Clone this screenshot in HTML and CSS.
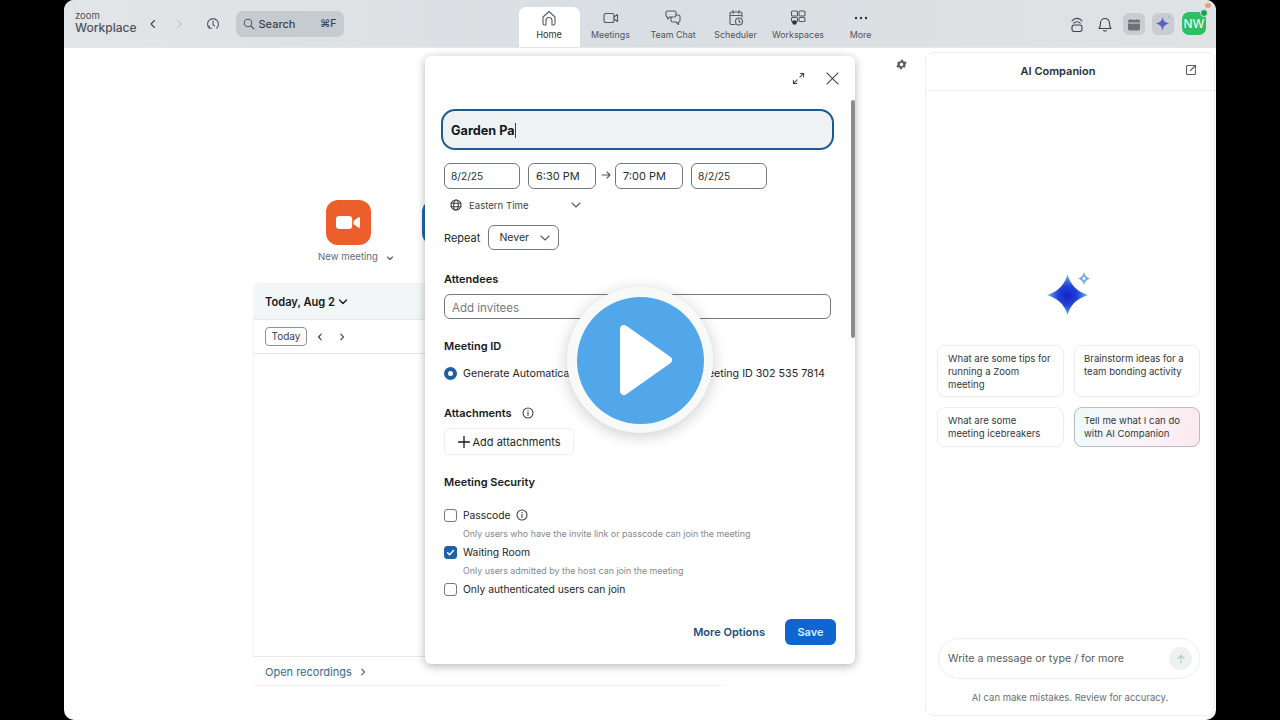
FILE: index.html
```html
<!DOCTYPE html>
<html lang="en">
<head>
<meta charset="utf-8">
<title>Zoom Workplace</title>
<link rel="stylesheet" href="styles.css">
</head>
<body>
<div class="frame">
  <header class="topbar">
    <div class="brand"><span class="brand-zoom">zoom</span><span class="brand-name">Workplace</span></div>
    <div class="history">
      <svg class="ic10" viewBox="0 0 10 10"><path d="M6.500 1.500 3 5l3.500 3.500" class="st dark"/></svg>
      <svg class="ic10 second" viewBox="0 0 10 10"><path d="M3.500 1.500 7 5 3.500 8.500" class="st faint"/></svg>
      <svg class="ic14 third" viewBox="0 0 14 14"><path d="M3.300 11.200A5.500 5.500 0 1 1 10.700 11.200M3.300 11.200V8.800M3.300 11.200H5.600M7 4v3.500l1.500 1.500" class="st mid"/></svg>
    </div>
    <div class="search">
      <svg class="ic12" viewBox="0 0 12 12"><circle cx="5" cy="5" r="3.800" class="st mid"/><path d="m8 8 3 3" class="st mid"/></svg>
      <span class="search-text">Search</span>
      <span class="search-key">⌘F</span>
    </div>
    <nav class="tabs">
      <div class="tab active">
        <svg class="tab-ic" viewBox="0 0 18 18"><path d="M3 8 9 2.500 15 8v6.500a1.500 1.500 0 0 1-1.500 1.500H12v-4.500a3 3 0 0 0-6 0V16H4.500A1.500 1.500 0 0 1 3 14.500Z" class="st mid"/></svg>
        <span>Home</span>
      </div>
      <div class="tab w62">
        <svg class="tab-ic" viewBox="0 0 18 18"><rect x="2" y="4.500" width="10" height="9" rx="2" class="st mid"/><path d="m12 8 3.500-2.500v7L12 10" class="st mid"/></svg>
        <span>Meetings</span>
      </div>
      <div class="tab w63">
        <svg class="tab-ic" viewBox="0 0 18 18"><path d="M3.500 2h7A1.500 1.500 0 0 1 12 3.500v3A1.500 1.500 0 0 1 10.500 8H6L3.500 10V8A1.500 1.500 0 0 1 2 6.500v-3A1.500 1.500 0 0 1 3.500 2Z" class="st mid"/><path d="M12 6h2.500A1.500 1.500 0 0 1 16 7.500v4a1.500 1.500 0 0 1-1.500 1.500V15.500L12 13H8.500A1.500 1.500 0 0 1 7 11.500V8" class="st mid"/></svg>
        <span>Team Chat</span>
      </div>
      <div class="tab w62">
        <svg class="tab-ic" viewBox="0 0 18 18"><path d="M8 15.500H4.500A1.500 1.500 0 0 1 3 14V4.500A1.500 1.500 0 0 1 4.500 3h9A1.500 1.500 0 0 1 15 4.500V8M3 6.500h12M6 1.500v3M12 1.500v3" class="st mid"/><circle cx="12" cy="12.500" r="3.500" class="st mid"/><path d="M12 10.500v2l1.300 1" class="st mid"/></svg>
        <span>Scheduler</span>
      </div>
      <div class="tab w63">
        <svg class="tab-ic" viewBox="0 0 18 18"><rect x="2.500" y="2" width="6" height="5" rx="1" class="st mid"/><rect x="10" y="2" width="6" height="5" rx="1" class="st mid"/><rect x="2.500" y="8.500" width="6" height="4" rx="1" class="st mid"/><rect x="10" y="8.500" width="6" height="4" rx="1" class="st mid"/><circle cx="5.500" cy="13.500" r="2.300" class="fill-dark"/></svg>
        <span>Workspaces</span>
      </div>
      <div class="tab w62">
        <svg class="tab-ic" viewBox="0 0 18 18"><circle cx="4" cy="9" r="1.200" class="fill-dark"/><circle cx="9" cy="9" r="1.200" class="fill-dark"/><circle cx="14" cy="9" r="1.200" class="fill-dark"/></svg>
        <span>More</span>
      </div>
    </nav>
    <div class="tools">
      <svg class="tool" viewBox="0 0 16 18"><path d="M3 6C5.500 2.500 10.500 2.500 13 6M4.800 8.200C6.500 6.300 9.500 6.300 11.200 8.200" class="st dark"/><rect x="3" y="10" width="10" height="6.500" rx="2.200" class="st dark"/></svg>
      <svg class="tool bell" viewBox="0 0 16 18"><path d="M2 13.500c1.500-1.500 1.500-3 1.500-5.500a4.500 4.500 0 0 1 9 0c0 2.500 0 4 1.500 5.500ZM6.500 15.500c.7.800 2.300.8 3 0" class="st dark"/></svg>
      <div class="tool-box">
        <svg class="gift" viewBox="0 0 16 16"><rect x="2" y="3.500" width="12" height="11" rx="1.800" class="fill-gift"/><path d="M2 7h12M5.500 1.500 7 3.500M10.500 1.500 9 3.500" class="st light"/></svg>
      </div>
      <div class="tool-box">
        <svg class="tool-star" viewBox="0 0 20 20"><path d="M9 2.500C9.800 7 11 8.500 16 10 11 11.500 9.800 13 9 18 8.200 13 7 11.500 2 10 7 8.500 8.200 7 9 2.500Z" class="fill-violet"/><path d="M15.500 1.500c.3 1.500.7 1.800 2 2-1.300.3-1.700.7-2 2-.2-1.300-.7-1.700-2-2 1.300-.2 1.800-.5 2-2Z" class="fill-lilac"/></svg>
      </div>
      <div class="avatar">NW<i class="avatar-dot"></i></div>
    </div>
    <i class="corner-dot"></i>
  </header>

  <main class="main">
    <section class="home">
      <div class="home-tools">
        <svg class="gear" viewBox="0 0 24 24"><path d="M19.400 13a7.700 7.700 0 0 0 0-2l2.100-1.600-2-3.500-2.500 1a7.500 7.500 0 0 0-1.700-1l-.4-2.600h-4l-.4 2.600a7.500 7.500 0 0 0-1.700 1l-2.500-1-2 3.500L4.600 11a7.700 7.700 0 0 0 0 2l-2.100 1.600 2 3.500 2.500-1a7.500 7.500 0 0 0 1.700 1l.4 2.600h4l.4-2.600a7.500 7.500 0 0 0 1.700-1l2.500 1 2-3.500ZM12 15.200a3.200 3.200 0 1 1 0-6.400 3.200 3.200 0 0 1 0 6.400Z" class="fill-gear"/></svg>
      </div>
      <div class="hero">
        <div class="hero-item">
          <div class="hero-icon orange">
            <svg class="cam" viewBox="0 0 26 16"><rect x="0" y="1" width="17.500" height="14" rx="3.500" class="fill-white"/><path d="M19 6.500 24 2.500c.8-.6 2-.2 2 1v9c0 1.200-1.200 1.600-2 1L19 9.500Z" class="fill-white"/></svg>
          </div>
          <div class="hero-label">New meeting
            <svg class="hero-chev" viewBox="0 0 8 8"><path d="m1.500 3 2.500 2.500L6.500 3" class="st mid"/></svg>
          </div>
        </div>
        <div class="hero-item">
          <div class="hero-icon blue"></div>
          <div class="hero-label">Join</div>
        </div>
      </div>
      <div class="calendar">
        <div class="cal-head">
          <span>Today, Aug 2</span>
          <svg class="ic10" viewBox="0 0 10 10"><path d="m1.500 3 3.500 3.500L8.500 3" class="st black"/></svg>
        </div>
        <div class="cal-tools">
          <span class="today-btn">Today</span>
          <svg class="ic8" viewBox="0 0 8 8"><path d="M5.200 1.200 2.500 4l2.700 2.800" class="st dark"/></svg>
          <svg class="ic8 next" viewBox="0 0 8 8"><path d="M2.800 1.200 5.500 4 2.800 6.800" class="st dark"/></svg>
        </div>
        <div class="cal-body"></div>
        <div class="cal-foot">
          <span>Open recordings</span>
          <svg class="ic8" viewBox="0 0 8 8"><path d="M2.800 1.200 5.500 4 2.800 6.800" class="st mid"/></svg>
        </div>
      </div>
    </section>

    <aside class="ai">
      <div class="ai-head">
        <span>AI Companion</span>
        <svg class="ai-pop" viewBox="0 0 12 12"><path d="M6 1.500H2.500a1 1 0 0 0-1 1v7a1 1 0 0 0 1 1h7a1 1 0 0 0 1-1V6.500M7 1.500h3.500V5M10.500 1.500 5.500 6.500" class="st mid"/></svg>
      </div>
      <div class="ai-body">
        <svg class="ai-star" viewBox="0 0 44 46">
          <defs>
            <radialGradient id="starfill" cx="50%" cy="52%" r="52%">
              <stop offset="0" stop-color="#1222c4"/>
              <stop offset=".45" stop-color="#2340d8"/>
              <stop offset=".75" stop-color="#4a86e4"/>
              <stop offset="1" stop-color="#9cc8f2"/>
            </radialGradient>
          </defs>
          <path d="M20.500 3 Q24.500 19 41 24 Q24.500 29 20.500 44 Q16.500 29 0 24 Q16.500 19 20.500 3Z" fill="url(#starfill)"/>
          <path d="M37 1Q38 6 43 7.500 38 9 37 14 36 9 31 7.500 36 6 37 1Z" class="fill-skystar"/>
          <path d="M37 5c.3 1 .8 1.700 2 2.500-1.200.8-1.700 1.500-2 2.500-.3-1-.8-1.700-2-2.500 1.200-.8 1.700-1.500 2-2.500Z" class="fill-white"/>
        </svg>
        <div class="prompts">
          <div class="prompt tall">What are some tips for running a Zoom meeting</div>
          <div class="prompt tall">Brainstorm ideas for a team bonding activity</div>
          <div class="prompt">What are some meeting icebreakers</div>
          <div class="prompt tint">Tell me what I can do with AI Companion</div>
        </div>
        <div class="composer">
          <span>Write a message or type / for more</span>
          <span class="send"><svg class="ic10" viewBox="0 0 10 10"><path d="M5 9V1.500M2 4.500l3-3 3 3" class="st pale"/></svg></span>
        </div>
        <p class="ai-note">AI can make mistakes. Review for accuracy.</p>
      </div>
    </aside>
  </main>

  <section class="modal">
    <div class="modal-head">
      <svg class="ic13" viewBox="0 0 14 14"><path d="M8.500 5.500 12.500 1.500M9 1.500h3.500V5M5.500 8.500l-4 4M1.500 9v3.500H5" class="st dark"/></svg>
      <svg class="ic13" viewBox="0 0 14 14"><path d="m1 1 12 12M13 1 1 13" class="st dark"/></svg>
    </div>
    <div class="title-field">Garden Pa<i class="caret"></i></div>
    <div class="date-row">
      <div class="box w76">8/2/25</div>
      <div class="box w68">6:30 PM</div>
      <svg class="ic10 arrow" viewBox="0 0 10 10"><path d="M1 5h8M6 2l3 3-3 3" class="st mid"/></svg>
      <div class="box w68">7:00 PM</div>
      <div class="box w76">8/2/25</div>
    </div>
    <div class="tz-row">
      <svg class="ic12" viewBox="0 0 12 12"><circle cx="6" cy="6" r="5" class="st dark"/><ellipse cx="6" cy="6" rx="2.300" ry="5" class="st dark"/><path d="M1 4.300h10M1 7.700h10" class="st dark"/></svg>
      <span class="tz-text">Eastern Time</span>
      <svg class="ic10" viewBox="0 0 10 10"><path d="M1 3l4 4 4-4" class="st mid"/></svg>
    </div>
    <div class="repeat-row">
      <span>Repeat</span>
      <div class="box select">Never
        <svg class="ic10" viewBox="0 0 10 10"><path d="M1 3l4 4 4-4" class="st mid"/></svg>
      </div>
    </div>
    <h3 class="heading attendees">Attendees</h3>
    <div class="box invite">Add invitees</div>
    <h3 class="heading meeting-id">Meeting ID</h3>
    <div class="id-row">
      <span class="choice"><i class="radio on"></i>Generate Automatically</span>
      <span class="choice"><i class="radio"></i>Personal Meeting ID 302 535 7814</span>
    </div>
    <h3 class="heading attach">Attachments
      <svg class="info" viewBox="0 0 12 12"><circle cx="6" cy="6" r="5" class="st dark"/><path d="M6 5.400v3" class="st dark"/><circle cx="6" cy="3.600" r=".7" class="fill-dark"/></svg>
    </h3>
    <div class="attach-btn">
      <svg class="ic12" viewBox="0 0 12 12"><path d="M6 .5v11M.5 6h11" class="st black"/></svg>
      Add attachments
    </div>
    <h3 class="heading security">Meeting Security</h3>
    <div class="check-row first"><i class="check"></i>Passcode
      <svg class="info tight" viewBox="0 0 12 12"><circle cx="6" cy="6" r="5" class="st dark"/><path d="M6 5.400v3" class="st dark"/><circle cx="6" cy="3.600" r=".7" class="fill-dark"/></svg>
    </div>
    <p class="hint">Only users who have the invite link or passcode can join the meeting</p>
    <div class="check-row"><i class="check on"><svg viewBox="0 0 12 12" class="tick"><path d="m2.800 6.200 2.200 2.200 4.200-4.600" class="st white"/></svg></i>Waiting Room</div>
    <p class="hint">Only users admitted by the host can join the meeting</p>
    <div class="check-row last"><i class="check"></i>Only authenticated users can join</div>
    <div class="modal-foot">
      <span class="more-options">More Options</span>
      <span class="save">Save</span>
    </div>
    <i class="scrollbar"></i>
  </section>

  <div class="play">
    <div class="play-disc">
      <svg class="play-tri" viewBox="0 0 54 72"><path d="M5 5 49 36 5 67Z" class="tri"/></svg>
    </div>
  </div>
</div>
</body>
</html>
```

FILE: styles.css
```css
* { box-sizing: border-box; }
html, body { margin: 0; height: 100%; background: #000; }
body { font-family: Inter, "Liberation Sans", sans-serif; color: #232333; }
h3, p { margin: 0; }
i { display: block; font-style: normal; }
svg { display: block; flex: none; }

.st { fill: none; stroke-width: 1.100; stroke-linecap: round; stroke-linejoin: round; }
.dark { stroke: #3c4249; }
.black { stroke: #15181c; stroke-width: 1.300; }
.mid { stroke: #555b63; }
.faint { stroke: #c3c8cd; }
.light { stroke: #d4d7da; }
.pale { stroke: #b6c4c4; }
.white { stroke: #fff; stroke-width: 1.600; }
.fill-dark { fill: #30353b; }
.fill-white { fill: #fff; }
.fill-gift { fill: #6d7074; }
.fill-violet { fill: #5a63c4; }
.fill-lilac { fill: #a5aee0; }
.fill-gear { fill: #5a6068; }
.fill-skystar { fill: #6fa9e4; }

.ic8 { width: 8px; height: 8px; }
.ic10 { width: 10px; height: 10px; }
.ic12 { width: 12px; height: 12px; }
.ic13 { width: 13px; height: 13px; }
.ic14 { width: 14px; height: 14px; }

.frame {
  position: relative;
  width: 1152px;
  height: 720px;
  margin: 0 auto;
  border-radius: 10px;
  overflow: hidden;
  background: #fff;
  display: flex;
  flex-direction: column;
}

/* top bar */
.topbar {
  position: relative;
  height: 48px;
  flex: none;
  display: flex;
  align-items: center;
  background: linear-gradient(90deg, #e2e5e8, #d9dee2 50%, #dfe3e6);
  border-bottom: 1px solid #e4e7ea;
  padding-left: 11px;
}
.brand { width: 73px; display: flex; flex-direction: column; color: #4c5259; margin-top: -1px; }
.brand-zoom { font-size: 9.500px; line-height: 9px; }
.brand-name { font-size: 12px; line-height: 15px; font-weight: 500; }
.history { display: flex; align-items: center; width: 88px; margin-left: -.5px; }
.second { margin-left: 16px; }
.third { margin-left: 22px; }
.search {
  width: 108px;
  height: 26px;
  background: #c6cbcf;
  border-radius: 7px;
  display: flex;
  align-items: center;
  padding: 0 7px;
  font-size: 11px;
  color: #3c4249;
}
.search-text { margin-left: 4px; font-weight: 500; }
.search-key { margin-left: auto; font-size: 10.500px; font-weight: 500; }
.tabs { display: flex; height: 100%; align-items: flex-end; margin-left: 175px; }
.tab {
  width: 60px;
  height: 40px;
  display: flex;
  flex-direction: column;
  align-items: center;
  font-size: 8.900px;
  line-height: 11px;
  color: #4f555c;
  padding-top: 2px;
}
.tab span { margin-top: 2px; white-space: nowrap; }
.tab.active { width: 61px; background: #fff; border-radius: 7px 7px 0 0; color: #30353b; font-size: 9.200px; }
.w62 { width: 62px; }
.w63 { width: 63px; }
.tab-ic { width: 18px; height: 18px; }
.tools { margin-left: auto; margin-right: 10px; display: flex; align-items: center; }
.tool { width: 16px; height: 18px; margin-right: 12px; }
.tool.bell { margin-right: 10px; }
.tool-box {
  width: 22px;
  height: 22px;
  background: #c9cdd1;
  border-radius: 6px;
  display: flex;
  align-items: center;
  justify-content: center;
  margin-right: 7px;
}
.gift { width: 16px; height: 16px; }
.tool-star { width: 19px; height: 19px; }
.avatar {
  position: relative;
  width: 24px;
  height: 23px;
  margin-left: 1px;
  background: #2fbf63;
  border-radius: 7px;
  color: #fff;
  font-size: 12px;
  line-height: 24px;
  text-align: center;
}
.avatar-dot {
  position: absolute;
  right: -2px;
  top: -3px;
  width: 8px;
  height: 8px;
  border-radius: 50%;
  background: #17a24c;
  border: 1px solid #d9dee2;
}
.corner-dot {
  position: absolute;
  right: 5px;
  top: 3px;
  width: 6px;
  height: 5px;
  border-radius: 50%;
  background: #e6a270;
}

/* main */
.main { flex: 1; min-height: 0; display: flex; }
.home { width: 861px; flex: none; padding-left: 189px; display: flex; flex-direction: column; }
.home-tools { display: flex; justify-content: flex-end; padding: 10px 17px 0 0; height: 152px; }
.gear { width: 13px; height: 13px; }
.hero { display: flex; margin-left: 47px; }
.hero-item { position: relative; width: 96px; display: flex; flex-direction: column; align-items: center; }
.hero-icon { width: 45px; height: 45px; border-radius: 12px; display: flex; align-items: center; justify-content: center; }
.orange { background: #ec5f2a; }
.blue { background: #1f66b0; }
.cam { width: 24px; height: 15px; }
.hero-label { position: relative; margin-top: 6px; font-size: 9.600px; line-height: 12px; color: #666c73; white-space: nowrap; }
.hero-chev { position: absolute; left: calc(100% + 8px); top: 3px; width: 8px; height: 8px; }

.calendar {
  width: 472px;
  height: 403px;
  margin-top: 20px;
  display: flex;
  flex-direction: column;
}
.cal-head {
  height: 37px;
  flex: none;
  display: flex;
  align-items: center;
  gap: 3px;
  padding: 1px 0 0 12px;
  background: #f3f6f7;
  border-bottom: 1px solid #e6e9ea;
  border-radius: 6px 6px 0 0;
  font-size: 11.100px;
  font-weight: 600;
  color: #15181c;
}
.cal-tools {
  height: 34px;
  flex: none;
  display: flex;
  align-items: center;
  padding-left: 11px;
  border-bottom: 1px solid #e6e9ea;
  border-left: 1px solid #f3f5f6;
}
.today-btn {
  width: 42px;
  height: 19px;
  border: 1px solid #8e9399;
  border-radius: 4px;
  font-size: 10px;
  line-height: 17px;
  text-align: center;
  color: #3c4249;
  margin-right: 9px;
}
.next { margin-left: 14px; }
.cal-body { flex: 1; border-left: 1px solid #f1f3f4; }
.cal-foot {
  height: 30px;
  flex: none;
  display: flex;
  align-items: center;
  gap: 7px;
  padding: 2px 0 0 12px;
  border-top: 1px solid #e6e9ea;
  border-bottom: 1px solid #f0f2f3;
  font-size: 11px;
  color: #346a8d;
}

/* ai panel */
.ai {
  width: 290px;
  flex: none;
  margin: 4px 2px 4px 0;
  border: 1px solid #eceef0;
  border-radius: 8px;
  display: flex;
  flex-direction: column;
}
.ai-head {
  position: relative;
  height: 38px;
  flex: none;
  border-bottom: 1px solid #eceef0;
  display: flex;
  align-items: center;
  justify-content: center;
  font-size: 11px;
  font-weight: 600;
  color: #2a2f35;
  padding: 0 24px 2px 0;
}
.ai-pop { position: absolute; right: 17px; top: 11px; width: 12px; height: 12px; }
.ai-body { flex: 1; min-height: 0; display: flex; flex-direction: column; padding: 0 11px; }
.ai-star { width: 44px; height: 46px; margin: 180px 0 0 110px; }
.prompts {
  margin-top: 28px;
  display: grid;
  grid-template-columns: 127px 126px;
  column-gap: 10px;
  row-gap: 10px;
}
.prompt {
  height: 40px;
  padding: 6px 10px;
  border: 1px solid #eceef0;
  border-radius: 8px;
  font-size: 9.600px;
  line-height: 13px;
  color: #33383e;
  box-shadow: 0 1px 2px rgba(0, 0, 0, .03);
}
.prompt:nth-child(even) { padding-left: 9px; }
.tall { height: 52px; }
.tint {
  border-color: #b9bcc2;
  background: linear-gradient(100deg, #edfaf9, #fbf4f7 55%, #fbe9ef);
}
.composer {
  height: 41px;
  flex: none;
  margin: auto 3px 0 1px;
  border: 1px solid #eceef0;
  border-radius: 21px;
  display: flex;
  align-items: center;
  justify-content: space-between;
  padding: 0 7px 0 9px;
  font-size: 10.700px;
  color: #565b61;
}
.send {
  width: 23px;
  height: 23px;
  border-radius: 50%;
  background: #eef1f1;
  display: flex;
  align-items: center;
  justify-content: center;
}
.ai-note { margin: 11px 0 9px; font-size: 9.500px; line-height: 16px; color: #6a6f75; text-align: center; }

/* modal */
.modal {
  position: absolute;
  left: 361px;
  top: 56px;
  width: 430px;
  height: 608px;
  background: #fff;
  border-radius: 6px;
  box-shadow: 0 2px 10px rgba(0, 0, 0, .3);
  padding: 0 19px;
  display: flex;
  flex-direction: column;
  font-size: 10.700px;
  color: #232629;
}
.modal-head { height: 53px; flex: none; display: flex; justify-content: flex-end; align-items: flex-start; padding-top: 16px; margin-right: -3px; gap: 21px; }
.title-field {
  height: 41px;
  flex: none;
  margin: 0 2px 0 -3px;
  background: #eef2f3;
  border: 2px solid #1a5b93;
  border-radius: 14px;
  display: flex;
  align-items: center;
  padding: 1px 0 0 8px;
  font-size: 12.700px;
  font-weight: 700;
  color: #15181c;
}
.caret { width: 1px; height: 15px; background: #3c4249; }
.date-row { margin-top: 13px; display: flex; align-items: center; gap: 8px; flex: none; }
.box {
  height: 26px;
  border: 1px solid #74797f;
  border-radius: 6px;
  display: flex;
  align-items: center;
  padding-left: 7px;
  font-size: 11px;
  color: #2a2e33;
}
.w76 { width: 76px; padding-left: 6px; font-size: 10.200px; }
.w68 { width: 68px; }
.arrow { margin: -2px -3.500px 0; }
.tz-row { margin: 8px 0 0 6px; height: 16px; flex: none; display: flex; align-items: center; font-size: 9.600px; color: #3c4249; }
.tz-text { margin: 0 0 0 7px; width: 102px; }
.repeat-row { margin-top: 12px; height: 25px; flex: none; display: flex; align-items: center; gap: 8px; font-size: 11px; }
.select { width: 71px; height: 25px; padding: 0 8px 0 10px; justify-content: space-between; font-size: 10.500px; }
.heading { height: 16px; flex: none; font-size: 11px; line-height: 16px; font-weight: 600; color: #15181c; display: flex; align-items: center; }
.attendees { margin-top: 21px; }
.invite { width: 387px; height: 25px; margin-top: 7px; padding-top: 2px; flex: none; color: #74797f; font-size: 11.500px; }
.meeting-id { margin-top: 19px; }
.id-row { margin-top: 11px; height: 16px; flex: none; display: flex; justify-content: space-between; padding-right: 11px; }
.choice { display: flex; align-items: center; white-space: nowrap; }
.radio { width: 13px; height: 13px; margin-right: 6px; border-radius: 50%; border: 1px solid #74797f; }
.radio.on { border: 4px solid #1f5ea3; }
.attach { margin-top: 24px; }
.info { width: 12px; height: 12px; margin-left: 10px; }
.info.tight { margin-left: 5px; }
.attach-btn {
  width: 130px;
  height: 27px;
  flex: none;
  margin-top: 7px;
  border: 1px solid #eceef0;
  border-radius: 5px;
  display: flex;
  align-items: center;
  padding-left: 13px;
  gap: 2.500px;
  font-size: 11px;
  color: #232629;
}
.security { margin-top: 19px; }
.check-row { margin-top: 4px; height: 16px; flex: none; display: flex; align-items: center; white-space: nowrap; font-size: 10.300px; }
.check-row.first { margin-top: 17px; }
.check { width: 13px; height: 13px; margin-right: 6px; border: 1px solid #74797f; border-radius: 3px; }
.check.on { background: #1f5ea8; border-color: #1f5ea8; }
.tick { width: 11px; height: 11px; }
.hint { margin: 5px 0 0 19px; height: 12px; flex: none; font-size: 8.900px; line-height: 12px; color: #83888e; }
.modal-foot { margin-top: auto; padding-bottom: 19px; display: flex; justify-content: flex-end; align-items: center; gap: 20px; flex: none; }
.more-options { font-size: 11px; font-weight: 600; color: #1a4d7f; }
.save {
  width: 51px;
  height: 26px;
  border-radius: 6px;
  background: #0f66d0;
  color: #d9ecff;
  font-size: 11px;
  font-weight: 600;
  line-height: 26px;
  text-align: center;
}
.scrollbar { position: absolute; right: 0; top: 44px; width: 4px; height: 238px; border-radius: 2px; background: #8b8d90; }

/* play overlay */
.play {
  position: absolute;
  left: 503px;
  top: 287px;
  width: 146px;
  height: 146px;
  border-radius: 50%;
  background: #f8f9f9;
  box-shadow: 0 3px 16px rgba(0, 0, 0, .2);
  display: flex;
  align-items: center;
  justify-content: center;
}
.play-disc {
  width: 127px;
  height: 127px;
  border-radius: 50%;
  background: #52a6ea;
  display: flex;
  align-items: center;
  justify-content: center;
}
.play-tri { width: 54px; height: 72px; margin-left: 11px; }
.tri { fill: #fff; stroke: #fff; stroke-width: 8; stroke-linejoin: round; }
```
